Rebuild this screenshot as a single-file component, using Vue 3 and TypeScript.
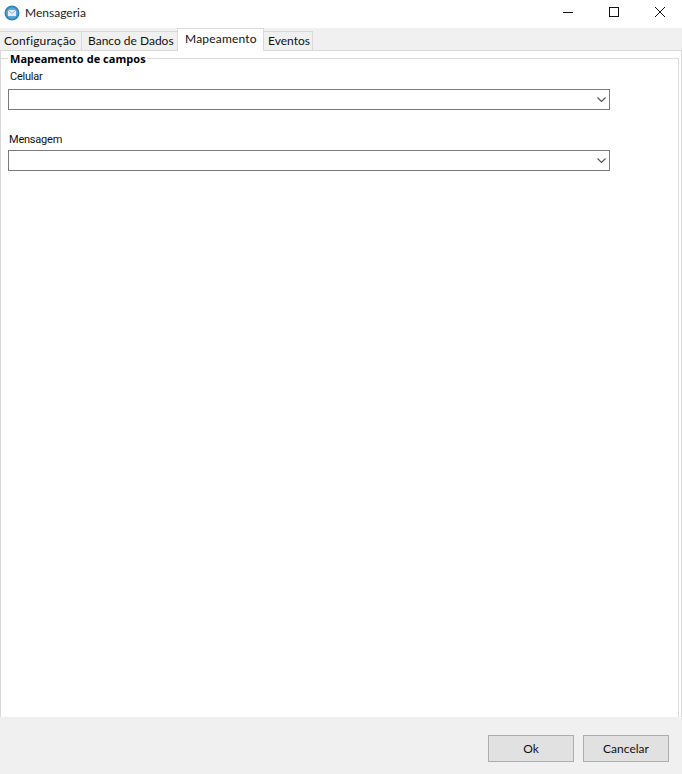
<script setup lang="ts">
const tabs: { label: string; active?: boolean }[] = [
  { label: 'Configuração' },
  { label: 'Banco de Dados' },
  { label: 'Mapeamento', active: true },
  { label: 'Eventos' },
]
const fields: string[] = ['Celular', 'Mensagem']
</script>

<template>
  <div class="window">
    <header class="titlebar">
      <div class="title-left">
        <svg class="app-icon" width="16" height="16" viewBox="0 0 16 16">
          <circle cx="8" cy="8" r="7.5" fill="#2f85b8" />
          <circle cx="8" cy="8" r="5.8" fill="#5ba7d6" />
          <rect x="4" y="5" width="8" height="6" fill="#e4eef6" />
          <path d="M4 5.2 L8 8.4 L12 5.2" fill="none" stroke="#8fb4d0" stroke-width="1" />
        </svg>
        <span class="title">Mensageria</span>
      </div>
      <div class="controls">
        <span class="ctl"><svg width="12" height="12" viewBox="0 0 12 12"><path d="M1 6.5 H11" stroke="#111" stroke-width="1" /></svg></span>
        <span class="ctl"><svg width="12" height="12" viewBox="0 0 12 12"><rect x="1.5" y="1.5" width="9" height="9" fill="none" stroke="#111" stroke-width="1" /></svg></span>
        <span class="ctl"><svg width="12" height="12" viewBox="0 0 12 12"><path d="M1 1 L11 11 M11 1 L1 11" stroke="#111" stroke-width="1" /></svg></span>
      </div>
    </header>

    <nav class="tabstrip">
      <div v-for="t in tabs" :key="t.label" class="tab" :class="{ active: t.active }">{{ t.label }}</div>
    </nav>

    <main class="page">
      <section class="group">
        <h2 class="legend">Mapeamento de campos</h2>
        <div class="fields">
          <div v-for="f in fields" :key="f" class="field">
            <label class="lbl">{{ f }}</label>
            <div class="combo">
              <svg width="9" height="5" viewBox="0 0 9 5"><path d="M0.5 0.5 L4.5 4.5 L8.5 0.5" fill="none" stroke="#5a5a5a" stroke-width="1.2" /></svg>
            </div>
          </div>
        </div>
      </section>
    </main>

    <footer class="footer">
      <button class="btn">Ok</button>
      <button class="btn">Cancelar</button>
    </footer>
  </div>
</template>

<style>
html, body { margin: 0; background: #fff; }
</style>

<style scoped>
.window {
  width: 682px;
  height: 774px;
  display: flex;
  flex-direction: column;
  font-family: "Lato", "Open Sans", sans-serif;
  font-size: 12px;
  color: #111;
  overflow: hidden;
  background: #fff;
}
.titlebar {
  height: 28px;
  flex: none;
  display: flex;
  align-items: center;
  justify-content: space-between;
  background: #fff;
  padding-left: 4px;
}
.title-left { display: flex; align-items: center; gap: 5px; margin-top: -3px; }
.app-icon { display: block; }
.title { font-size: 12px; color: #222; }
.controls { display: flex; margin-top: -4px; margin-right: -1px; }
.ctl { width: 46px; display: flex; justify-content: center; align-items: center; }
.tabstrip {
  height: 22px;
  flex: none;
  display: flex;
  align-items: flex-end;
  background: #f0f0f0;
  position: relative;
  z-index: 1;
}
.tab {
  height: 19px;
  box-sizing: border-box;
  line-height: 17px;
  background: #f0f0f0;
  border: 1px solid #d9d9d9;
  border-left: none;
  border-bottom: none;
  white-space: nowrap;
}
.tab:nth-child(1) { width: 82px; padding-left: 4px; letter-spacing: 0.16px; }
.tab:nth-child(2) { width: 96px; padding-left: 6px; }
.tab:nth-child(4) { width: 49px; padding-left: 4px; }
.tab.active {
  width: 87px;
  height: 23px;
  margin-bottom: -1px;
  margin-left: -1px;
  line-height: 20px;
  background: #fff;
  padding-left: 7px;
  letter-spacing: 0.2px;
  border-left: 1px solid #d9d9d9;
}
.page {
  flex: 1;
  min-height: 0;
  background: #fff;
  border: 1px solid #d9d9d9;
  border-bottom: none;
  box-sizing: border-box;
  padding: 7px 2px 0 0;
  display: flex;
  flex-direction: column;
}
.group {
  flex: 1;
  border: 1px solid #dcdcdc;
  border-bottom: none;
  border-left: none;
  padding-left: 7px;
  position: relative;
}
.legend {
  position: absolute;
  top: -7px;
  left: 7px;
  margin: 0;
  padding: 0 1px 0 2px;
  background: #fff;
  font-family: "Open Sans", sans-serif;
  font-size: 11px;
  letter-spacing: 0.05px;
  line-height: 14px;
  font-weight: 700;
  color: #000;
}
.fields {
  display: flex;
  flex-direction: column;
  gap: 22px;
  padding-top: 10px;
}
.field { display: flex; flex-direction: column; gap: 2px; }
.field:first-child .lbl { padding-left: 2px; margin-bottom: 2px; }
.lbl {
  font-family: "Roboto", "Open Sans", sans-serif;
  font-size: 11px;
  letter-spacing: -0.22px;
  line-height: 16px;
  color: #111;
  padding-left: 1px;
}
.combo {
  width: 602px;
  height: 21px;
  box-sizing: border-box;
  border: 1px solid #7a7a7a;
  background: #fff;
  display: flex;
  align-items: center;
  justify-content: flex-end;
  padding-right: 3px;
}
.footer {
  height: 57px;
  flex: none;
  background: #f0f0f0;
  display: flex;
  justify-content: flex-end;
  gap: 9px;
  padding: 18px 13px 0 0;
  box-sizing: border-box;
}
.btn {
  width: 86px;
  height: 27px;
  box-sizing: border-box;
  border: 1px solid #adadad;
  background: #e1e1e1;
  font: inherit;
  color: #111;
  padding: 0;
}
</style>
